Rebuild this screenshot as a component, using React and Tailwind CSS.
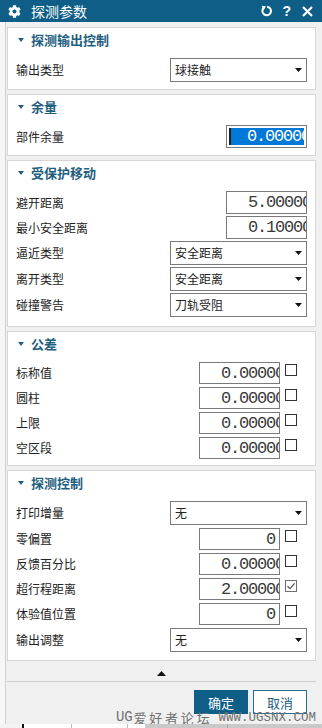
import { FaCog } from 'react-icons/fa';

const CJK = "font-['Noto_Sans_CJK_SC',sans-serif]";
const MONO = "font-['Liberation_Mono',monospace] text-[17px] tracking-[-1.2px] leading-none";

function Caret() {
  return (
    <svg width="7" height="4" viewBox="0 0 7 4" className="shrink-0">
      <path d="M0 0H7L3.5 4Z" fill="#111" />
    </svg>
  );
}

function Select({ value }) {
  return (
    <div className="w-[137px] h-[24px] border border-[#7a7a7a] bg-white flex items-center pl-[4px] pr-[4px]">
      <span className="flex-1 text-[12px] text-[#222]">{value}</span>
      <Caret />
    </div>
  );
}

function NumInput({ value, clip, h = 'h-[22px]', selected }) {
  if (selected) {
    return (
      <div className={`w-[81px] ${h} border border-[#7a7a7a] bg-white p-[2px] flex`}>
        <div className="flex-1 bg-[#0078d7] border-l-2 border-[#1e1e1e] flex items-center justify-end overflow-hidden">
          <span className={`${MONO} text-white -mr-[6px]`}>{value}</span>
        </div>
      </div>
    );
  }
  return (
    <div className={`w-[81px] ${h} border border-[#7a7a7a] bg-white flex items-center justify-end overflow-hidden ${clip ? '' : 'pr-[4px]'}`}>
      <span className={`${MONO} text-[#3a3a3a] ${clip ? '-mr-[5px]' : ''}`}>{value}</span>
    </div>
  );
}

function Check({ on }) {
  return (
    <div className={`self-start mt-[2px] ml-[5px] mr-[10px] w-[12px] h-[12px] bg-white border ${on ? 'border-[#6f6f6f]' : 'border-[#333]'} flex items-center justify-center`}>
      {on && (
        <svg width="10" height="10" viewBox="0 0 10 10">
          <path d="M1.5 5.2L4 7.6L8.6 2.4" fill="none" stroke="#555" strokeWidth="1.2" />
        </svg>
      )}
    </div>
  );
}

function Row({ label, children, h = 'h-[22px]' }) {
  return (
    <div className={`flex items-center ${h}`}>
      <span className="flex-1 text-[12px] text-[#222]">{label}</span>
      {children}
    </div>
  );
}

function Panel({ title, children, gap = 'gap-[2px]', pb = 'pb-[7px]' }) {
  return (
    <div className="bg-white border border-[#d6d6d6]">
      <div className="h-[30px] flex items-start pt-[4px] pl-[10px] gap-[7px]">
        <div className="h-[16px] flex items-center">
          <svg width="6" height="4" viewBox="0 0 6 4">
            <path d="M0 0H6L3 4Z" fill="#1f5f80" />
          </svg>
        </div>
        <span className="text-[13px] leading-[16px] font-bold text-[#1f5f80]">{title}</span>
      </div>
      <div className={`flex flex-col ${gap} pl-[8px] pr-[8px] ${pb}`}>{children}</div>
    </div>
  );
}

export default function App() {
  return (
    <div className={`w-[322px] h-[728px] bg-[#f6f6f6] flex flex-col overflow-hidden ${CJK}`}>
      {/* title bar */}
      <div className="h-[22px] bg-[#0e5e87] flex items-center pl-[8px] pr-[9px] text-white shrink-0">
        <FaCog className="w-[13px] h-[13px]" />
        <span className="ml-[10px] text-[14px] leading-none">探测参数</span>
        <div className="flex-1" />
        <svg width="12" height="12" viewBox="0 0 12 12" className="mr-[9px]">
          <path d="M3 2.6A4.3 4.3 0 1 0 6.2 1.7" fill="none" stroke="#fff" strokeWidth="2" />
          <path d="M0.6 0.8L5 1.2L2.6 5Z" fill="#fff" />
        </svg>
        <span className="text-[14px] font-bold leading-none mr-[11px] font-['Liberation_Sans',sans-serif]">?</span>
        <svg width="11" height="11" viewBox="0 0 11 11">
          <path d="M1 1L10 10M10 1L1 10" stroke="#fff" strokeWidth="2.2" />
        </svg>
      </div>

      {/* body */}
      <div className="flex-1 ml-[5px] border-l border-[#d0d0d0] bg-[#f0f0f0] flex flex-col">
        <div className="ml-[1px] w-[309px] pt-[5px] flex flex-col gap-[4px]">
          <Panel title="探测输出控制">
            <Row label="输出类型" h="h-[24px]">
              <Select value="球接触" />
            </Row>
          </Panel>

          <Panel title="余量">
            <Row label="部件余量" h="h-[23px]">
              <NumInput value="0.00000" h="h-[23px]" selected />
            </Row>
          </Panel>

          <Panel title="受保护移动" pb="pb-[9px]">
            <Row label="避开距离" h="h-[23px]">
              <NumInput value="5.00000" clip h="h-[23px]" />
            </Row>
            <Row label="最小安全距离" h="h-[23px]">
              <NumInput value="0.10000" clip h="h-[23px]" />
            </Row>
            <Row label="逼近类型" h="h-[24px]">
              <Select value="安全距离" />
            </Row>
            <Row label="离开类型" h="h-[24px]">
              <Select value="安全距离" />
            </Row>
            <Row label="碰撞警告" h="h-[24px]">
              <Select value="刀轨受阻" />
            </Row>
          </Panel>

          <Panel title="公差" gap="gap-[3px]" pb="pb-[6px]">
            {['标称值', '圆柱', '上限', '空区段'].map((l) => (
              <Row key={l} label={l}>
                <NumInput value="0.00000" clip />
                <Check />
              </Row>
            ))}
          </Panel>

          <Panel title="探测控制" gap="gap-[3px]" pb="pb-[8px]">
            <Row label="打印增量" h="h-[24px]">
              <Select value="无" />
            </Row>
            <Row label="零偏置">
              <NumInput value="0" />
              <Check />
            </Row>
            <Row label="反馈百分比">
              <NumInput value="0.00000" clip />
              <Check />
            </Row>
            <Row label="超行程距离">
              <NumInput value="2.00000" clip />
              <Check on />
            </Row>
            <Row label="体验值位置">
              <NumInput value="0" />
              <Check />
            </Row>
            <Row label="输出调整" h="h-[24px]">
              <Select value="无" />
            </Row>
          </Panel>

          {/* footer */}
          <div className="h-[16px] flex items-center justify-center">
            <svg width="9" height="5" viewBox="0 0 9 5">
              <path d="M0 5H9L4.5 0Z" fill="#111" />
            </svg>
          </div>
          <div className="-mt-[4px] border-t border-[#cfcfcf] pt-[8px] flex justify-end gap-[5px] pr-[9px]">
            <button className="w-[54px] h-[24px] bg-[#0e5e87] text-white text-[13px] leading-none">确定</button>
            <button className="w-[54px] h-[24px] bg-white border border-[#2a6d92] text-[#1f5f80] text-[13px] leading-none">取消</button>
          </div>
          <div className="-mt-[5px] h-[11px] flex items-end justify-end text-[#707070] leading-none">
            <span className="font-['Liberation_Mono',monospace] text-[14px] tracking-[-0.2px]">UG</span>
            <span className="text-[13px] tracking-[2.8px] ml-[1px]">爱好者论坛</span>
            <span className="font-['Liberation_Mono',monospace] text-[12.5px] ml-[6px]">WWW.UGSNX.COM</span>
          </div>
        </div>
      </div>

      {/* strip below the dialog */}
      <div className="h-[7px] flex shrink-0">
        <div className="w-[22px] bg-[#f3f3f3]" />
        <div className="w-[2px] bg-[#111]" />
        <div className="w-[48px] bg-white border-r border-[#bdbdbd]" />
        <div className="w-[56px] bg-white border-r border-[#bdbdbd]" />
        <div className="w-[17px] bg-white" />
        <div className="flex-1 bg-[#c9c9c9] flex">
          <div className="w-[83px] border-r border-[#a8a8a8]" />
        </div>
      </div>
    </div>
  );
}
